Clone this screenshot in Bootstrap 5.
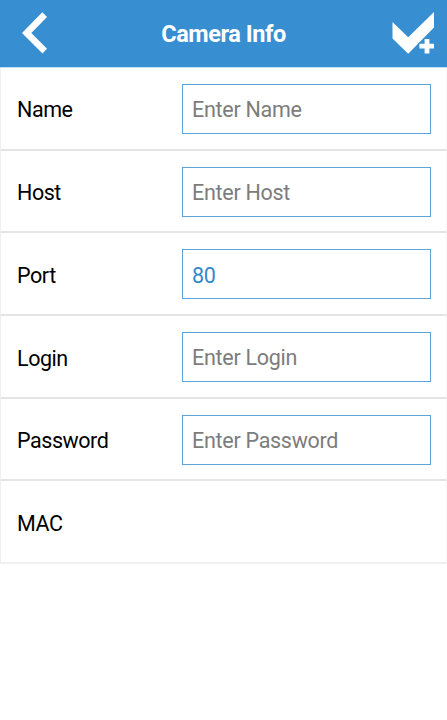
<!DOCTYPE html>
<html lang="en">
<head>
<meta charset="utf-8">
<meta name="viewport" content="width=device-width, initial-scale=1">
<title>Camera Info</title>
<link href="https://cdn.jsdelivr.net/npm/bootstrap@5.3.0/dist/css/bootstrap.min.css" rel="stylesheet">
<style>
body{font-family:Roboto,sans-serif;color:#000;background:#fff;font-size:21.5px;line-height:1.2}
.topbar{height:68px;background:#378fd2;color:#fff;border-bottom:1px solid #c3dff3}
.topbar h1{font-size:23.5px;font-weight:700;letter-spacing:-.45px;padding-top:1px}
.topbar button{line-height:0}
.topbar svg{display:block}
.field-row{height:82.7px;padding:1px 15px 0 16px;border:solid;border-color:#f3f3f3 #f6f6f6 #e4e4e4 #f0f0f0;border-width:0 1px 2px 1px}
.field-row:last-child{border-bottom-color:#f0f0f0}
.field-name{width:165px;padding-top:3px;letter-spacing:-.45px}
.field-row .form-control{height:50px;border:1px solid #5ba5db;padding:2px 9px 0;font-size:21.5px;letter-spacing:-.28px;color:#3389cb;background:#fff}
.field-row .form-control::placeholder{color:#7c7c7c;opacity:1}
</style>
</head>
<body>
<header class="topbar d-flex align-items-center justify-content-between">
<button class="btn p-0 border-0" aria-label="Back"><svg width="67" height="67" viewBox="0 0 67 67"><path d="M42.3 12.3 22 33l20.5 20.5 4.5-4.7L31.3 33 47 17z" fill="#fff"/></svg></button>
<h1 class="m-0">Camera Info</h1>
<button class="btn p-0 border-0" aria-label="Save"><svg width="67" height="67" viewBox="380 0 67 67"><path d="M392.5 22v16.5L408.2 53.7 434 27.5V12L408.2 37.3z" fill="#fff"/><path d="M424.6 39h4.8v4.7h4.6v4.7h-4.6v5.2h-4.8v-5.2h-5.2v-4.7h5.2z" fill="#fff" stroke="#378fd2" stroke-width="2" paint-order="stroke"/></svg></button>
</header>
<main>
<div class="field-row d-flex align-items-center"><label class="field-name flex-shrink-0" for="name">Name</label><input id="name" class="form-control rounded-0" placeholder="Enter Name"></div>
<div class="field-row d-flex align-items-center"><label class="field-name flex-shrink-0" for="host">Host</label><input id="host" class="form-control rounded-0" placeholder="Enter Host"></div>
<div class="field-row d-flex align-items-center"><label class="field-name flex-shrink-0" for="port">Port</label><input id="port" class="form-control rounded-0" value="80"></div>
<div class="field-row d-flex align-items-center"><label class="field-name flex-shrink-0" for="login">Login</label><input id="login" class="form-control rounded-0" placeholder="Enter Login"></div>
<div class="field-row d-flex align-items-center"><label class="field-name flex-shrink-0" for="password">Password</label><input id="password" class="form-control rounded-0" placeholder="Enter Password"></div>
<div class="field-row d-flex align-items-center"><span class="field-name">MAC</span></div>
</main>
<script src="https://cdn.jsdelivr.net/npm/bootstrap@5.3.0/dist/js/bootstrap.bundle.min.js"></script>
</body>
</html>
